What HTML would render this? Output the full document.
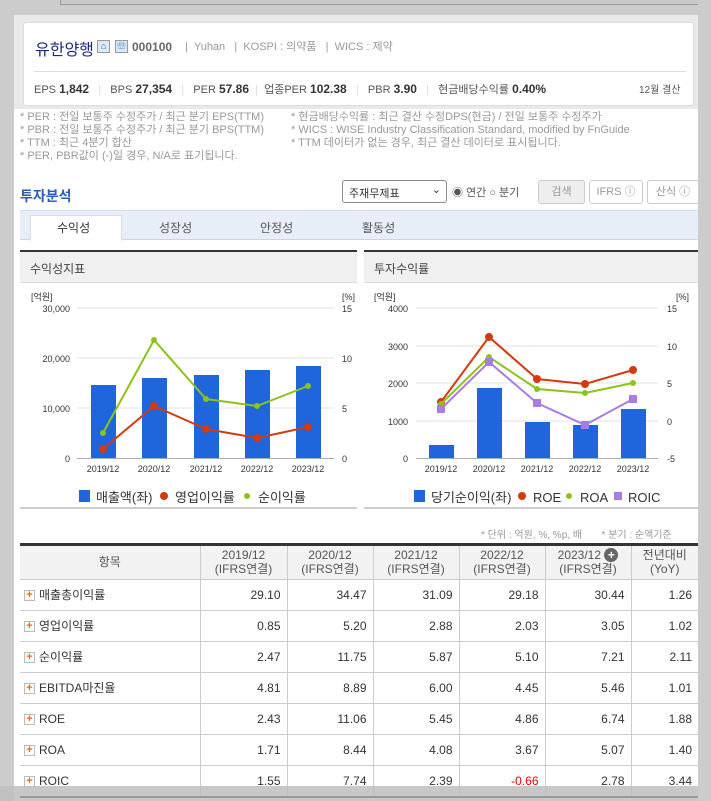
<!DOCTYPE html>
<html><head><meta charset="utf-8"><style>
*{margin:0;padding:0;box-sizing:border-box}
body{width:711px;height:801px;overflow:hidden;background:#cccccc;font-family:"Liberation Sans","Noto Sans CJK KR",sans-serif;position:relative;color:#333}
.a{position:absolute;white-space:nowrap}
.fn{font-size:11px;color:#999}
table{border-collapse:collapse;position:absolute;left:20px;width:678px;font-size:12px}
td,th{border-right:1px solid #ccc;border-bottom:1px solid #ccc;height:31px;padding:0 6px}
th{background:#f2f2f2;font-weight:normal;color:#555;height:33px;line-height:14px;font-size:12px}
td{text-align:right;color:#333}
td:first-child{text-align:left;padding-left:4px}
td:last-child,th:last-child{border-right:none}
.pl{display:inline-block;width:11px;height:11px;border:1px solid #bbb;background:#fff;color:#f60;font-size:11px;line-height:9px;text-align:center;font-weight:bold;vertical-align:middle;margin-right:4px}
</style></head><body>
<div class="a" style="left:60px;top:-2px;width:640px;height:7px;border:1px solid #999;border-top:none;background:#c8c8c8"></div>
<div class="a" style="left:14px;top:15px;width:684px;height:786px;background:#fff"></div>
<div class="a" style="left:14px;top:15px;width:684px;height:94px;background:#e9e9e9"></div>
<div class="a" style="left:23px;top:22px;width:671px;height:84px;background:#fff;border:1px solid #ddd;border-radius:3px"></div>
<div class="a" style="left:35px;top:36px;font-size:16px;color:#1a2a7c">유한양행</div>
<div class="a" style="left:97px;top:40px;width:13px;height:13px;border:1px solid #999;background:#dde8f4;color:#1a7ac0;font-size:9px;text-align:center;line-height:11px">⌂</div>
<div class="a" style="left:115px;top:40px;width:13px;height:13px;border:1px solid #999;background:#dde8f4;color:#1a7ac0;font-size:9px;text-align:center;line-height:11px">☏</div>
<div class="a" style="left:132px;top:40px;font-size:12px;font-weight:bold;color:#666">000100</div>
<div class="a" style="left:185px;top:38px;font-size:11px;color:#999">| &nbsp;Yuhan &nbsp; | &nbsp;KOSPI : 의약품 &nbsp; | &nbsp;WICS : 제약</div>
<div class="a" style="left:34px;top:71px;width:652px;height:1px;background:#ddd"></div>
<div class="a" style="left:34px;top:81px;font-size:11px;color:#555">EPS <b style="color:#333;font-size:12px">1,842</b> &nbsp; <span style="color:#ddd">|</span> &nbsp; BPS <b style="color:#333;font-size:12px">27,354</b> &nbsp; <span style="color:#ddd">|</span> &nbsp; PER <b style="color:#333;font-size:12px">57.86</b> &nbsp;<span style="color:#ddd">|</span> &nbsp;업종PER <b style="color:#333;font-size:12px">102.38</b> &nbsp; <span style="color:#ddd">|</span> &nbsp; PBR <b style="color:#333;font-size:12px">3.90</b> &nbsp; <span style="color:#ddd">|</span> &nbsp; 현금배당수익률 <b style="color:#333;font-size:12px">0.40%</b></div>
<div class="a" style="left:639px;top:81px;font-size:10px;color:#555">12월 결산</div>
<div class="a fn" style="left:20px;top:111px;line-height:13px">* PER : 전일 보통주 수정주가 / 최근 분기 EPS(TTM)<br>* PBR : 전일 보통주 수정주가 / 최근 분기 BPS(TTM)<br>* TTM : 최근 4분기 합산<br>* PER, PBR값이 (-)일 경우, N/A로 표기됩니다.</div>
<div class="a fn" style="left:291px;top:111px;line-height:13px">* 현금배당수익률 : 최근 결산 수정DPS(현금) / 전일 보통주 수정주가<br>* WICS : WISE Industry Classification Standard, modified by FnGuide<br>* TTM 데이터가 없는 경우, 최근 결산 데이터로 표시됩니다.</div>
<div class="a" style="left:20px;top:186px;font-size:14px;font-weight:bold;color:#2a5cb8">투자분석</div>
<div class="a" style="left:342px;top:180px;width:105px;height:23px;border:1px solid #888;border-radius:3px;font-size:11px;padding:4px 6px">주재무제표<span style="position:absolute;right:5px;top:2px;font-size:11px">⌄</span></div>
<div class="a" style="left:452px;top:184px;font-size:11px;color:#555">◉ 연간 ○ 분기</div>
<div class="a" style="left:538px;top:180px;width:47px;height:24px;border:1px solid #ccc;border-radius:3px;background:#eee;font-size:11px;color:#999;text-align:center;line-height:22px">검색</div>
<div class="a" style="left:589px;top:180px;width:54px;height:24px;border:1px solid #ccc;border-radius:3px;font-size:11px;color:#999;text-align:center;line-height:22px">IFRS ⓘ</div>
<div class="a" style="left:647px;top:180px;width:52px;height:24px;border:1px solid #ccc;border-radius:3px;font-size:11px;color:#999;text-align:center;line-height:22px">산식 ⓘ</div>
<div class="a" style="left:20px;top:210px;width:678px;height:30px;background:#e8eef8;border-top:1px solid #d6dde8;border-bottom:1px solid #cdd4e0"></div>
<div class="a" style="left:30px;top:215px;width:92px;height:26px;background:#fff;border:1px solid #d6dde8;border-bottom:none"></div>
<div class="a" style="left:57px;top:219px;font-size:12px">수익성</div>
<div class="a" style="left:159px;top:219px;font-size:12px;color:#555">성장성</div>
<div class="a" style="left:260px;top:219px;font-size:12px;color:#555">안정성</div>
<div class="a" style="left:362px;top:219px;font-size:12px;color:#555">활동성</div>

<div class="a" style="left:20px;top:250px;width:337px;height:33px;background:#f0f0f0;border-top:2px solid #333;border-bottom:1px solid #ddd;font-size:12px;padding:8px 10px;color:#444">수익성지표</div>
<div class="a" style="left:364px;top:250px;width:334px;height:33px;background:#f0f0f0;border-top:2px solid #333;border-bottom:1px solid #ddd;font-size:12px;padding:8px 10px;color:#444">투자수익률</div>
<div class="a" style="left:20px;top:507px;width:337px;height:2px;background:#ccc"></div>
<div class="a" style="left:364px;top:507px;width:334px;height:2px;background:#ccc"></div>

<svg class="a" style="left:0;top:280px" width="711" height="230" viewBox="0 280 711 230" font-family="Liberation Sans, Noto Sans CJK KR, sans-serif">
<g font-size="9" fill="#333">
<text x="31" y="300">[억원]</text><text x="342" y="300">[%]</text>
<text x="70" y="312" text-anchor="end">30,000</text><text x="70" y="362" text-anchor="end">20,000</text><text x="70" y="412" text-anchor="end">10,000</text><text x="70" y="462" text-anchor="end">0</text>
<text x="342" y="312">15</text><text x="342" y="362">10</text><text x="342" y="412">5</text><text x="342" y="462">0</text>
<text x="103" y="472" text-anchor="middle">2019/12</text><text x="154" y="472" text-anchor="middle">2020/12</text><text x="206" y="472" text-anchor="middle">2021/12</text><text x="257" y="472" text-anchor="middle">2022/12</text><text x="308" y="472" text-anchor="middle">2023/12</text>
</g>
<g stroke="#e0e0e0"><line x1="77" y1="308" x2="334" y2="308"/><line x1="77" y1="358" x2="334" y2="358"/><line x1="77" y1="408" x2="334" y2="408"/></g>
<line x1="77" y1="458.5" x2="334" y2="458.5" stroke="#aab"/>
<g fill="#1f66dd"><rect x="91" y="385" width="25" height="73"/><rect x="142" y="378" width="25" height="80"/><rect x="194" y="375" width="25" height="83"/><rect x="245" y="370" width="25" height="88"/><rect x="296" y="366" width="25" height="92"/></g>
<polyline points="103,449 154,406 206,429 257,438 308,427" fill="none" stroke="#d33a10" stroke-width="2"/>
<g fill="#d33a10"><circle cx="103" cy="449" r="4"/><circle cx="154" cy="406" r="4"/><circle cx="206" cy="429" r="4"/><circle cx="257" cy="438" r="4"/><circle cx="308" cy="427" r="4"/></g>
<polyline points="103,433 154,340 206,399 257,406 308,386" fill="none" stroke="#8cc21a" stroke-width="2"/>
<g fill="#8cc21a"><circle cx="103" cy="433" r="3"/><circle cx="154" cy="340" r="3"/><circle cx="206" cy="399" r="3"/><circle cx="257" cy="406" r="3"/><circle cx="308" cy="386" r="3"/></g>
<g font-size="13" fill="#333">
<rect x="79" y="490" width="11" height="12" fill="#1f66dd"/><text x="96" y="502">매출액(좌)</text>
<circle cx="164" cy="496" r="4" fill="#d33a10"/><text x="175" y="502">영업이익률</text>
<circle cx="247" cy="496" r="3" fill="#8cc21a"/><text x="258" y="502">순이익률</text>
</g>

<g font-size="9" fill="#333">
<text x="374" y="300">[억원]</text><text x="676" y="300">[%]</text>
<text x="408" y="312" text-anchor="end">4000</text><text x="408" y="350" text-anchor="end">3000</text><text x="408" y="387" text-anchor="end">2000</text><text x="408" y="425" text-anchor="end">1000</text><text x="408" y="462" text-anchor="end">0</text>
<text x="667" y="312">15</text><text x="667" y="350">10</text><text x="667" y="387">5</text><text x="667" y="425">0</text><text x="667" y="462">-5</text>
<text x="441" y="472" text-anchor="middle">2019/12</text><text x="489" y="472" text-anchor="middle">2020/12</text><text x="537" y="472" text-anchor="middle">2021/12</text><text x="585" y="472" text-anchor="middle">2022/12</text><text x="633" y="472" text-anchor="middle">2023/12</text>
</g>
<g stroke="#e0e0e0"><line x1="416" y1="308" x2="658" y2="308"/><line x1="416" y1="346" x2="658" y2="346"/><line x1="416" y1="383" x2="658" y2="383"/><line x1="416" y1="421" x2="658" y2="421"/></g>
<line x1="416" y1="458.5" x2="658" y2="458.5" stroke="#aab"/>
<g fill="#1f66dd"><rect x="429" y="445" width="25" height="13"/><rect x="477" y="388" width="25" height="70"/><rect x="525" y="422" width="25" height="36"/><rect x="573" y="425" width="25" height="33"/><rect x="621" y="409" width="25" height="49"/></g>
<polyline points="441,402 489,337 537,379 585,384 633,370" fill="none" stroke="#d33a10" stroke-width="2"/>
<g fill="#d33a10"><circle cx="441" cy="402" r="4"/><circle cx="489" cy="337" r="4"/><circle cx="537" cy="379" r="4"/><circle cx="585" cy="384" r="4"/><circle cx="633" cy="370" r="4"/></g>
<polyline points="441,404 489,357 537,389 585,393 633,383" fill="none" stroke="#8cc21a" stroke-width="2"/>
<g fill="#8cc21a"><circle cx="441" cy="404" r="3"/><circle cx="489" cy="357" r="3"/><circle cx="537" cy="389" r="3"/><circle cx="585" cy="393" r="3"/><circle cx="633" cy="383" r="3"/></g>
<polyline points="441,409 489,362 537,403 585,425 633,399" fill="none" stroke="#a77ee0" stroke-width="2"/>
<g fill="#a77ee0"><rect x="437" y="405" width="8" height="8"/><rect x="485" y="358" width="8" height="8"/><rect x="533" y="399" width="8" height="8"/><rect x="581" y="421" width="8" height="8"/><rect x="629" y="395" width="8" height="8"/></g>
<g font-size="13" fill="#333">
<rect x="414" y="490" width="11" height="12" fill="#1f66dd"/><text x="431" y="502">당기순이익(좌)</text>
<circle cx="522" cy="496" r="4" fill="#d33a10"/><text x="533" y="502">ROE</text>
<circle cx="569" cy="496" r="3" fill="#8cc21a"/><text x="580" y="502">ROA</text>
<rect x="614" y="492" width="8" height="8" fill="#a77ee0"/><text x="628" y="502">ROIC</text>
</g>
</svg>
<div class="a fn" style="left:481px;top:526px;font-size:10px">* 단위 : 억원, %, %p, 배 &nbsp; &nbsp; &nbsp; * 분기 : 순액기준</div>
<div class="a" style="left:20px;top:543px;width:678px;height:3px;background:#333"></div>
<table style="top:546px">
<colgroup><col style="width:180px"><col style="width:87px"><col style="width:86px"><col style="width:86px"><col style="width:86px"><col style="width:86px"><col style="width:67px"></colgroup>
<tr><th>항목</th><th>2019/12<br>(IFRS연결)</th><th>2020/12<br>(IFRS연결)</th><th>2021/12<br>(IFRS연결)</th><th>2022/12<br>(IFRS연결)</th><th>2023/12 <span style="display:inline-block;width:14px;height:14px;border-radius:7px;background:#666;color:#fff;font-size:12px;line-height:14px;text-align:center;font-weight:bold">+</span><br>(IFRS연결)</th><th>전년대비<br>(YoY)</th></tr>
<tr><td><span class="pl">+</span>매출총이익률</td><td>29.10</td><td>34.47</td><td>31.09</td><td>29.18</td><td>30.44</td><td>1.26</td></tr>
<tr><td><span class="pl">+</span>영업이익률</td><td>0.85</td><td>5.20</td><td>2.88</td><td>2.03</td><td>3.05</td><td>1.02</td></tr>
<tr><td><span class="pl">+</span>순이익률</td><td>2.47</td><td>11.75</td><td>5.87</td><td>5.10</td><td>7.21</td><td>2.11</td></tr>
<tr><td><span class="pl">+</span>EBITDA마진율</td><td>4.81</td><td>8.89</td><td>6.00</td><td>4.45</td><td>5.46</td><td>1.01</td></tr>
<tr><td><span class="pl">+</span>ROE</td><td>2.43</td><td>11.06</td><td>5.45</td><td>4.86</td><td>6.74</td><td>1.88</td></tr>
<tr><td><span class="pl">+</span>ROA</td><td>1.71</td><td>8.44</td><td>4.08</td><td>3.67</td><td>5.07</td><td>1.40</td></tr>
<tr><td><span class="pl">+</span>ROIC</td><td>1.55</td><td>7.74</td><td>2.39</td><td style="color:#e00">-0.66</td><td>2.78</td><td>3.44</td></tr>
</table>
<div class="a" style="left:0;top:786px;width:711px;height:15px;background:rgba(190,190,190,0.85)"></div>
<div class="a" style="left:20px;top:796px;width:678px;height:2px;background:#999"></div>
<div class="a" style="left:698px;top:0;width:13px;height:801px;background:#cccccc"></div>
</body></html>
